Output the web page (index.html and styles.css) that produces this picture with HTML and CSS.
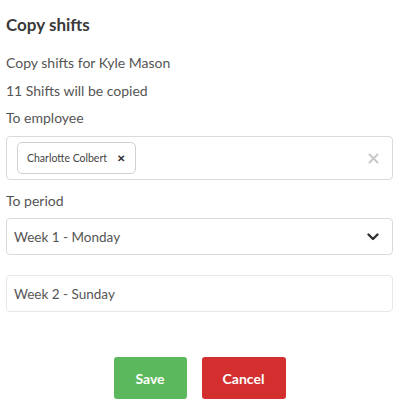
FILE: index.html
```html
<!DOCTYPE html>
<html>
<head>
<meta charset="utf-8">
<link rel="stylesheet" href="styles.css">
</head>
<body>
<div class="dialog">
  <h2 class="title">Copy shifts</h2>
  <p class="line">Copy shifts for Kyle Mason</p>
  <p class="line second-line">11 Shifts will be copied</p>
  <p class="label">To employee</p>
  <div class="multi">
    <span class="chip">Charlotte Colbert <span class="chip-x">&#x2715;</span></span>
    <span class="clear">
      <svg width="11" height="11" viewBox="0 0 11 11"><path d="M1.5 1.5 L9.5 9.5 M9.5 1.5 L1.5 9.5" stroke="#c8c8c8" stroke-width="2" stroke-linecap="round"/></svg>
    </span>
  </div>
  <p class="label period">To period</p>
  <div class="field select">
    <span>Week 1 - Monday</span>
    <svg width="12" height="8" viewBox="0 0 12 8"><path d="M1.5 1.5 L6 6 L10.5 1.5" fill="none" stroke="#333" stroke-width="2.4" stroke-linecap="round" stroke-linejoin="round"/></svg>
  </div>
  <div class="field second">
    <span>Week 2 - Sunday</span>
  </div>
  <div class="actions">
    <button class="btn save">Save</button>
    <button class="btn cancel">Cancel</button>
  </div>
</div>
</body>
</html>
```

FILE: styles.css
```css
html, body {
  margin: 0;
  padding: 0;
  background: #fff;
}
body {
  font-family: Lato, "Noto Sans", sans-serif;
  color: #555;
  font-size: 14px;
}
.dialog {
  padding: 14px 8px 0 6px;
  display: flex;
  flex-direction: column;
}
.title {
  margin: 0 0 17px 0;
  font-size: 17px;
  font-weight: 700;
  color: #3a3a3a;
  line-height: 22px;
}
.line, .label {
  margin: 0 0 8px 0;
  line-height: 20px;
}
.second-line {
  margin-bottom: 7px;
}
.multi {
  height: 42px;
  border: 1px solid #dadada;
  border-radius: 4px;
  display: flex;
  align-items: center;
  padding: 0 10px 0 10px;
}
.chip {
  display: inline-flex;
  align-items: center;
  height: 30px;
  border: 1px solid #cfcfcf;
  border-radius: 5px;
  padding: 0 10px 0 9px;
  font-size: 10.5px;
  color: #444;
}
.chip-x {
  margin-left: 10px;
  font-size: 10px;
  font-weight: 700;
  color: #333;
}
.clear {
  margin-left: auto;
  margin-right: 3px;
  display: flex;
}
.period {
  margin-top: 11px;
  margin-bottom: 7px;
}
.field {
  height: 35px;
  border: 1px solid #dadada;
  border-radius: 4px;
  display: flex;
  align-items: center;
  padding: 0 13px 0 7px;
  font-size: 13.5px;
  color: #555;
}
.select svg {
  margin-left: auto;
}
.second {
  margin-top: 20px;
  border-color: #e8e8e8;
}
.actions {
  display: flex;
  justify-content: center;
  gap: 15px;
  margin-top: 45px;
}
.btn {
  border: none;
  border-radius: 3px;
  height: 42px;
  color: #fff;
  font-family: Lato, "Noto Sans", sans-serif;
  font-weight: 700;
  font-size: 14px;
}
.save {
  width: 73px;
  background: #5cb85c;
}
.cancel {
  width: 84px;
  background: #d32f2f;
}
```
